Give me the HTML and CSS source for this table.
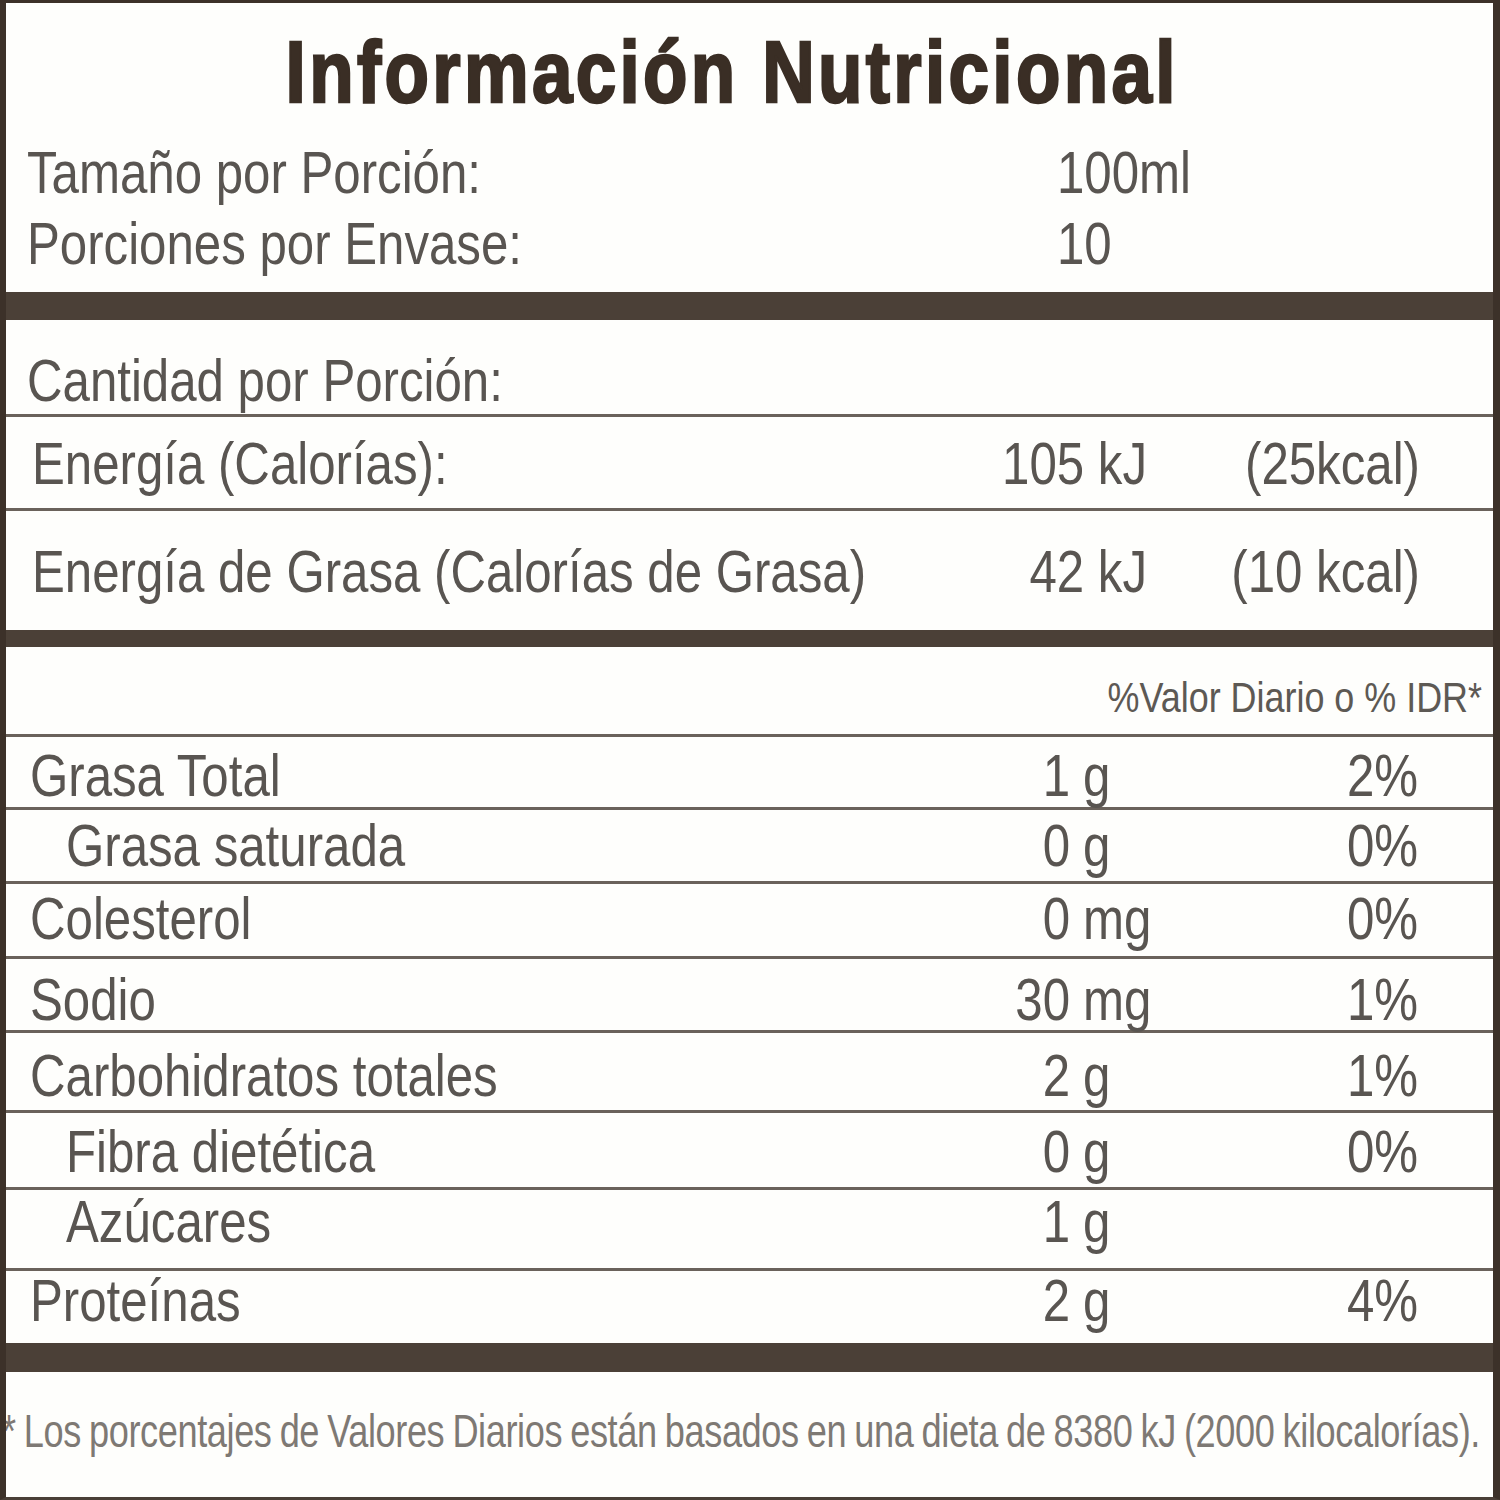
FILE: index.html
```html
<!DOCTYPE html>
<html lang="es">
<head>
<meta charset="utf-8">
<title>Información Nutricional</title>
<link rel="stylesheet" href="styles.css">
</head>
<body>
<div class="label">
  <section class="sec-top">
    <h1 class="title"><span class="title-text">Información Nutricional</span></h1>
    <div class="serv-row"><span class="sq">Tamaño por Porción:</span><span class="sq">100ml</span></div>
    <div class="serv-row"><span class="sq">Porciones por Envase:</span><span class="sq">10</span></div>
  </section>
  <div class="bar bar-a"></div>
  <section class="sec-energy">
    <div class="e-row e-head"><span class="sq">Cantidad por Porción:</span></div>
    <div class="e-row e-cal"><span class="sq">Energía (Calorías):</span><span class="sq sq-r kj">105 kJ</span><span class="sq sq-r kcal">(25kcal)</span></div>
    <div class="e-row e-fat"><span class="sq">Energía de Grasa (Calorías de Grasa)</span><span class="sq sq-r kj">42 kJ</span><span class="sq sq-r kcal">(10 kcal)</span></div>
  </section>
  <div class="bar bar-b"></div>
  <section class="sec-nutr">
    <div class="dv-head"><span class="dv-text">%Valor Diario o % IDR*</span></div>
    <div class="n-row"><span class="sq n-name">Grasa Total</span><span class="sq sq-r num">1</span><span class="sq unit">g</span><span class="sq sq-r pct">2%</span></div>
    <div class="n-row"><span class="sq n-name sub">Grasa saturada</span><span class="sq sq-r num">0</span><span class="sq unit">g</span><span class="sq sq-r pct">0%</span></div>
    <div class="n-row"><span class="sq n-name">Colesterol</span><span class="sq sq-r num">0</span><span class="sq unit">mg</span><span class="sq sq-r pct">0%</span></div>
    <div class="n-row"><span class="sq n-name">Sodio</span><span class="sq sq-r num">30</span><span class="sq unit">mg</span><span class="sq sq-r pct">1%</span></div>
    <div class="n-row"><span class="sq n-name">Carbohidratos totales</span><span class="sq sq-r num">2</span><span class="sq unit">g</span><span class="sq sq-r pct">1%</span></div>
    <div class="n-row"><span class="sq n-name sub">Fibra dietética</span><span class="sq sq-r num">0</span><span class="sq unit">g</span><span class="sq sq-r pct">0%</span></div>
    <div class="n-row"><span class="sq n-name sub">Azúcares</span><span class="sq sq-r num">1</span><span class="sq unit">g</span><span class="sq sq-r pct"></span></div>
    <div class="n-row"><span class="sq n-name">Proteínas</span><span class="sq sq-r num">2</span><span class="sq unit">g</span><span class="sq sq-r pct">4%</span></div>
  </section>
  <div class="bar bar-c"></div>
  <p class="foot"><span class="foot-text">* Los porcentajes de Valores Diarios están basados en una dieta de 8380 kJ (2000 kilocalorías).</span></p>
</div>
</body>
</html>
```

FILE: styles.css
```css
html, body {
  margin: 0;
  padding: 0;
  background: #fdfdfb;
}

.label {
  box-sizing: border-box;
  width: 1500px;
  height: 1500px;
  overflow: hidden;
  background: #fefefc;
  border-left: 6px solid #3c3129;
  border-right: 7px solid #3c3129;
  border-top: 3px solid #3c3129;
  border-bottom: 3px solid #4a3f37;
  font-family: "Liberation Sans", Arial, sans-serif;
  color: #595551;
  font-size: 60px;
  line-height: 60px;
}

/* condensed text (label face is a narrow grotesque) */
.sq {
  display: inline-block;
  min-width: 0;
  white-space: nowrap;
  transform: scaleX(0.82);
  transform-origin: 0 50%;
}
.sq-r {
  transform-origin: 100% 50%;
}

/* ---------- top section ---------- */
.sec-top {
  padding: 25px 0 13px 0;
}

.title {
  margin: 0 0 22px 0;
  padding-right: 35px;
  text-align: center;
  font-size: 87px;
  line-height: 87px;
  font-weight: 700;
  color: #3a2e25;
}
.title-text {
  display: inline-block;
  white-space: nowrap;
  letter-spacing: 4px;
  -webkit-text-stroke: 2.5px #3a2e25;
  transform: scaleX(0.836);
  transform-origin: 50% 50%;
}

.serv-row {
  display: grid;
  grid-template-columns: 1030px minmax(0, 1fr);
  padding-left: 21px;
  height: 71px;
  line-height: 71px;
}

/* ---------- bars ---------- */
.bar {
  background: #4b4037;
}
.bar-a { height: 28px; }
.bar-b { height: 17px; }
.bar-c { height: 29px; }

/* ---------- energy ---------- */
.e-row {
  display: grid;
  grid-template-columns: minmax(0, 1fr) 200px 273px;
  padding-left: 26px;
  padding-right: 73px;
}
.e-row .kj,
.e-row .kcal {
  text-align: right;
}
.e-head {
  padding-top: 31px;
  padding-bottom: 3px;
  border-bottom: 3px solid #6a625b;
  padding-left: 21px;
}
.e-cal {
  padding-top: 17px;
  padding-bottom: 14px;
  border-bottom: 3px solid #6a625b;
}
.e-fat {
  padding-top: 31px;
  padding-bottom: 28px;
}

/* ---------- nutrients ---------- */
.dv-head {
  font-size: 42px;
  line-height: 42px;
  text-align: right;
  padding: 30px 11px 15px 0;
  border-bottom: 3px solid #6a625b;
  color: #5d5954;
}
.dv-text {
  display: inline-block;
  white-space: nowrap;
  transform: scaleX(0.855);
  transform-origin: 100% 50%;
}

.n-row {
  display: grid;
  grid-template-columns: minmax(0, 1fr) 80px 198px 150px;
  padding-left: 24px;
  padding-right: 75px;
  border-bottom: 3px solid #6a625b;
}
.n-row .num { text-align: right; }
.n-row .unit { margin-left: 13px; }
.n-row .pct { text-align: right; }
.n-name.sub { margin-left: 36px; }

.n-row:nth-of-type(2) { padding-top: 9px;  padding-bottom: 1px; }
.n-row:nth-of-type(3) { padding-top: 6px;  padding-bottom: 5px; }
.n-row:nth-of-type(4) { padding-top: 5px;  padding-bottom: 7px; }
.n-row:nth-of-type(5) { padding-top: 11px; padding-bottom: 0; }
.n-row:nth-of-type(6) { padding-top: 13px; padding-bottom: 4px; }
.n-row:nth-of-type(7) { padding-top: 9px;  padding-bottom: 5px; }
.n-row:nth-of-type(8) { padding-top: 2px;  padding-bottom: 16px; }
.n-row:nth-of-type(9) { padding-top: 0;    padding-bottom: 12px; border-bottom: none; }

/* ---------- footnote ---------- */
.foot {
  margin: 36px 0 0 0;
  font-size: 46px;
  line-height: 46px;
  color: #7e7974;
  white-space: nowrap;
}
.foot-text {
  display: inline-block;
  margin-left: -4px;
  word-spacing: -2px;
  letter-spacing: -0.5px;
  transform: scaleX(0.786);
  transform-origin: 0 50%;
}
```
